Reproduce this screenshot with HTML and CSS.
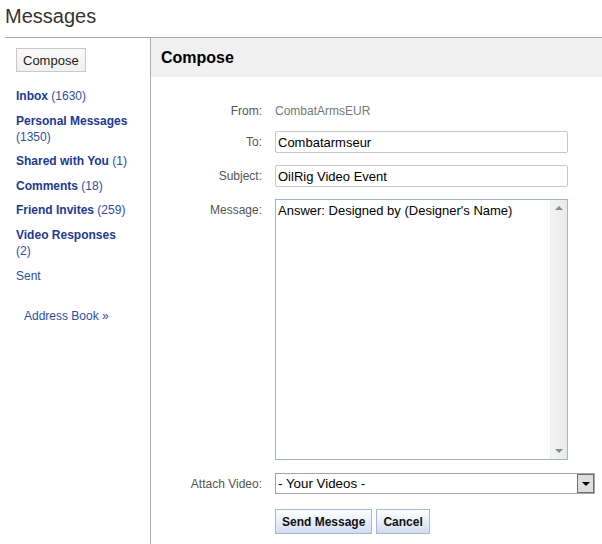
FILE: index.html
```html
<!DOCTYPE html>
<html>
<head>
<meta charset="utf-8">
<title>Messages</title>
<link rel="stylesheet" href="styles.css">
</head>
<body>
<h1 class="title">Messages</h1>
<div class="layout">
  <aside class="sidebar">
    <button class="compose-btn" type="button">Compose</button>
    <ul class="folders">
      <li><a href="#"><b>Inbox</b> (1630)</a></li>
      <li><a href="#"><b>Personal Messages</b> (1350)</a></li>
      <li><a href="#"><b>Shared with You</b> (1)</a></li>
      <li><a href="#"><b>Comments</b> (18)</a></li>
      <li><a href="#"><b>Friend Invites</b> (259)</a></li>
      <li><a href="#"><b>Video Responses</b> (2)</a></li>
      <li><a href="#">Sent</a></li>
    </ul>
    <a class="address" href="#">Address Book &raquo;</a>
  </aside>
  <main class="panel">
    <h2 class="panel-head">Compose</h2>
    <form class="form">
      <div class="row row-from">
        <label class="label">From:</label>
        <span class="value">CombatArmsEUR</span>
      </div>
      <div class="row row-to">
        <label class="label">To:</label>
        <input class="input" type="text" value="Combatarmseur">
      </div>
      <div class="row row-subject">
        <label class="label">Subject:</label>
        <input class="input" type="text" value="OilRig Video Event">
      </div>
      <div class="row row-message">
        <label class="label label-top">Message:</label>
        <div class="textarea-box">
          <textarea class="textarea">Answer: Designed by (Designer's Name)</textarea>
          <div class="scrollbar">
            <span class="arrow-up"></span>
            <span class="arrow-down"></span>
          </div>
        </div>
      </div>
      <div class="row row-attach">
        <label class="label">Attach Video:</label>
        <div class="select-box">
          <span class="select-text">- Your Videos -</span>
          <span class="select-btn"><span class="tri-down"></span></span>
        </div>
      </div>
      <div class="row row-buttons">
        <span class="label"></span>
        <button class="btn" type="button">Send Message</button>
        <button class="btn" type="button">Cancel</button>
      </div>
    </form>
  </main>
</div>
</body>
</html>
```

FILE: styles.css
```css
html, body {
  margin: 0;
  padding: 0;
  background: #fff;
}
body {
  font-family: Arial, "Liberation Sans", sans-serif;
  color: #000;
}
.title {
  margin: 0;
  padding: 5px 0 9px 5px;
  font-size: 20px;
  font-weight: normal;
  line-height: 23px;
  color: #333;
}
.layout {
  display: flex;
  margin-left: 5px;
  border-top: 1px solid #ababab;
  min-height: 506px;
}
.sidebar {
  flex-shrink: 0;
  width: 114px;
  padding: 10px 20px 0 11px;
  border-right: 1px solid #ababab;
}
.compose-btn {
  display: block;
  height: 24px;
  margin: 0;
  padding: 0 6px;
  font-family: Arial, "Liberation Sans", sans-serif;
  font-size: 13px;
  color: #222;
  background: linear-gradient(#f9f9f9, #f0f0f0);
  border: 1px solid #c9c9c9;
  border-radius: 0;
}
.folders {
  list-style: none;
  margin: 16px 0 0;
  padding: 0;
  font-size: 12px;
  line-height: 16px;
}
.folders li + li {
  margin-top: 8.6px;
}
.folders a {
  color: #2c4ea6;
  text-decoration: none;
}
.folders b {
  color: #1c3a94;
}
.address {
  display: block;
  margin-top: 24px;
  padding-left: 8px;
  font-size: 12px;
  line-height: 16px;
  color: #2c4ea6;
  text-decoration: none;
}
.panel {
  flex: 1;
}
.panel-head {
  margin: 0;
  padding: 10px;
  background: #f0f0f0;
  font-size: 16px;
  font-weight: bold;
  line-height: 19px;
  color: #000;
}
.form {
  margin: 0;
  padding-top: 23px;
}
.row {
  display: flex;
  align-items: center;
}
.label {
  flex-shrink: 0;
  box-sizing: border-box;
  width: 124px;
  padding-right: 13px;
  text-align: right;
  font-size: 12px;
  line-height: 14px;
  color: #555;
}
.row-from {
  height: 22px;
}
.value {
  font-size: 12px;
  color: #777;
}
.row-to {
  margin-top: 9px;
}
.row-subject {
  margin-top: 12px;
}
.input {
  box-sizing: border-box;
  width: 293px;
  height: 22px;
  margin: 0;
  padding: 0 2px;
  border: 1px solid #c8c8c8;
  border-radius: 2px;
  font-family: Arial, "Liberation Sans", sans-serif;
  font-size: 13px;
  color: #000;
  outline: none;
}
.row-message {
  margin-top: 12px;
  align-items: flex-start;
}
.label-top {
  padding-top: 4px;
}
.textarea-box {
  box-sizing: border-box;
  display: flex;
  width: 293px;
  height: 261px;
  border: 1px solid #9fb6cb;
}
.textarea {
  flex: 1;
  margin: 0;
  padding: 3px 2px;
  border: none;
  resize: none;
  outline: none;
  overflow: hidden;
  font-family: Arial, "Liberation Sans", sans-serif;
  font-size: 13px;
  line-height: 15px;
  color: #000;
}
.scrollbar {
  display: flex;
  flex-direction: column;
  justify-content: space-between;
  align-items: center;
  width: 16px;
  padding: 6px 0 6px;
  background: linear-gradient(90deg, #f4f4f4, #e9e9e9);
  border-left: 1px solid #ececec;
}
.arrow-up {
  width: 0;
  height: 0;
  border-left: 4px solid transparent;
  border-right: 4px solid transparent;
  border-bottom: 4px solid #8a8a8a;
}
.arrow-down {
  width: 0;
  height: 0;
  border-left: 4px solid transparent;
  border-right: 4px solid transparent;
  border-top: 4px solid #8a8a8a;
}
.row-attach {
  margin-top: 13px;
}
.select-box {
  box-sizing: border-box;
  display: flex;
  align-items: stretch;
  width: 320px;
  height: 21px;
  border: 1px solid #a5a5a5;
}
.select-text {
  flex: 1;
  padding-left: 2px;
  font-size: 13.33px;
  line-height: 19px;
  color: #000;
}
.select-btn {
  box-sizing: border-box;
  display: flex;
  align-items: center;
  justify-content: center;
  width: 17px;
  border: 1px solid #6e6e6e;
  background: #dedede;
}
.tri-down {
  width: 0;
  height: 0;
  border-left: 4px solid transparent;
  border-right: 4px solid transparent;
  border-top: 4px solid #000;
}
.row-buttons {
  margin-top: 15px;
}
.btn {
  height: 25px;
  margin: 0 4px 0 0;
  padding: 0 6px;
  border: 1px solid #a7b7d6;
  background: linear-gradient(#ffffff, #d3dcef);
  font-family: Arial, "Liberation Sans", sans-serif;
  font-size: 12px;
  font-weight: bold;
  color: #111;
}
```
